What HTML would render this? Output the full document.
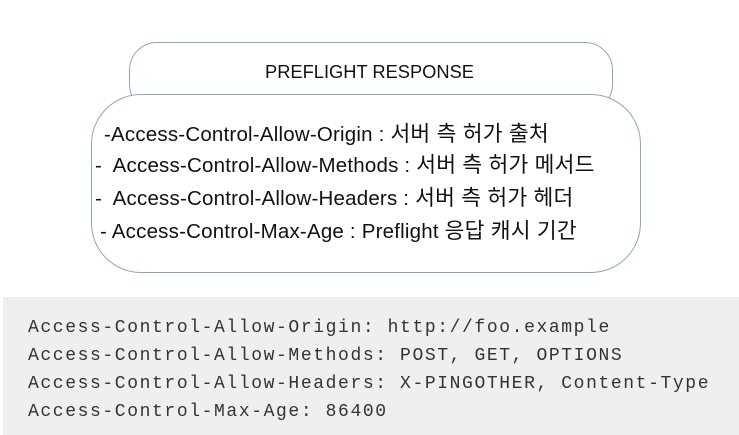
<!DOCTYPE html>
<html><head><meta charset="utf-8"><style>
body{margin:0;width:739px;height:435px;background:#fff;position:relative;overflow:hidden;font-family:"Liberation Sans","Noto Sans CJK KR",sans-serif;color:#111}
.top{position:absolute;left:129px;top:42px;width:484px;height:70px;border:1.5px solid #8aa4c8;border-radius:28px;background:#fff;box-sizing:border-box}
.title{position:absolute;left:0;width:739px;top:61px;text-align:center;font-size:18.3px}
.main{position:absolute;left:91px;top:94px;width:550px;height:179px;border:1.5px solid #8aa4c8;border-radius:50px;background:#fff;box-sizing:border-box}
.l{position:absolute;font-size:20.5px;letter-spacing:0.2px;white-space:nowrap}
.l span{font-size:21.5px}
.code{position:absolute;left:3px;top:297px;width:736px;height:138px;background:#efefef}
.c{position:absolute;left:28px;font-family:"Liberation Mono",monospace;font-size:18px;letter-spacing:1.6px;color:#333;white-space:nowrap}
</style></head><body>
<div class="top"></div>
<div class="main"></div>
<div class="title">PREFLIGHT RESPONSE</div>
<div class="l" style="left:104px;top:117px">-Access-Control-Allow-Origin : <span>서버 측 허가 출처</span></div>
<div class="l" style="left:95px;top:148px">-&nbsp; Access-Control-Allow-Methods : <span>서버 측 허가 메서드</span></div>
<div class="l" style="left:95px;top:181px">-&nbsp; Access-Control-Allow-Headers : <span>서버 측 허가 헤더</span></div>
<div class="l" style="left:100px;top:214px">- Access-Control-Max-Age : Preflight <span>응답 캐시 기간</span></div>
<div class="code"></div>
<div class="c" style="top:318px">Access-Control-Allow-Origin: http://foo.example</div>
<div class="c" style="top:346px">Access-Control-Allow-Methods: POST, GET, OPTIONS</div>
<div class="c" style="top:374px">Access-Control-Allow-Headers: X-PINGOTHER, Content-Type</div>
<div class="c" style="top:402px">Access-Control-Max-Age: 86400</div>
</body></html>
